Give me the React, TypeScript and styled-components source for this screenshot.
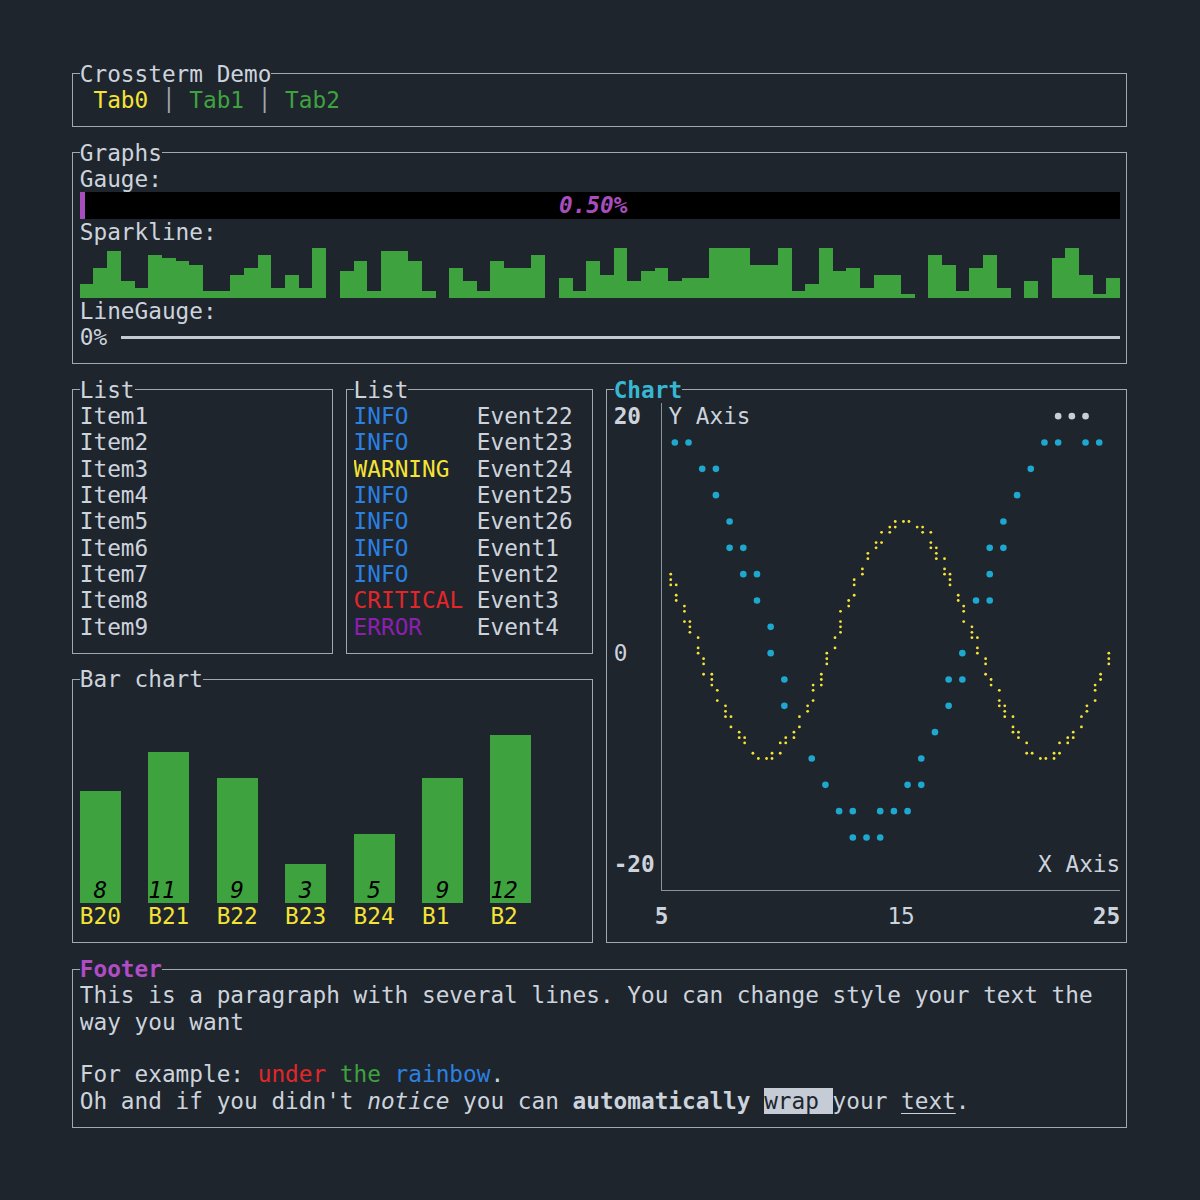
import React from "react";
import styled, { createGlobalStyle } from "styled-components";

// terminal cell size
const CW = 13.69;
const CH = 26.333;
const cols = (n: number) => `${(n * CW).toFixed(2)}px`;
const rows = (n: number) => `${(n * CH).toFixed(2)}px`;

const C = {
  bg: "#1e252d",
  fg: "#cdd3dc",
  border: "#a0a8b2",
  axis: "#8a929c",
  yellow: "#f5e335",
  green: "#3ea33f",
  blue: "#2b80e0",
  red: "#e3262a",
  magenta: "#8c1fae",
  purple: "#a84dbd",
  pink: "#b04cc4",
  cyan: "#1ea8cf",
  cyanTitle: "#38b7d3",
  line: "#c3cad3",
};

const SPARK = [
  4, 9, 14, 5, 3, 13, 12, 11, 10, 2, 2, 7, 9, 13, 3, 7, 3, 15, 0, 8, 11, 2, 14, 14, 11, 2, 0, 9, 5, 2, 11, 9, 9, 13, 0,
  6, 2, 11, 7, 15, 5, 8, 9, 5, 6, 6, 15, 15, 15, 10, 10, 15, 2, 4, 15, 8, 9, 3, 7, 7, 1, 0, 13, 10, 2, 9, 13, 3, 0, 5,
  0, 12, 15, 7, 1, 6,
];

const ITEMS = ["Item1", "Item2", "Item3", "Item4", "Item5", "Item6", "Item7", "Item8", "Item9"];

const LEVEL_COLORS: Record<string, string> = {
  INFO: C.blue,
  WARNING: C.yellow,
  CRITICAL: C.red,
  ERROR: C.magenta,
};

const EVENTS: [string, string][] = [
  ["INFO", "Event22"],
  ["INFO", "Event23"],
  ["WARNING", "Event24"],
  ["INFO", "Event25"],
  ["INFO", "Event26"],
  ["INFO", "Event1"],
  ["INFO", "Event2"],
  ["CRITICAL", "Event3"],
  ["ERROR", "Event4"],
];

const BARS: [string, number][] = [
  ["B20", 8],
  ["B21", 11],
  ["B22", 9],
  ["B23", 3],
  ["B24", 5],
  ["B1", 9],
  ["B2", 12],
];
const BAR_MAX = 15;

// chart data: same signals as the demo, window [5, 25]
const GRAPH_W = 33;
const GRAPH_H = 18;

function signal(interval: number, period: number, scale: number, skip: number, count: number) {
  const pts: [number, number][] = [];
  let x = 0;
  for (let i = 0; i < skip + count; i++) {
    if (i >= skip) pts.push([x, Math.sin(x / period) * scale]);
    x += interval;
  }
  return pts;
}

const inBounds = ([x, y]: [number, number]) => x >= 5 && x <= 25 && y >= -20 && y <= 20;

const yellowDots = (() => {
  const seen = new Set<string>();
  const out: [number, number][] = [];
  signal(0.1, 2, 10, 50, 200)
    .filter(inBounds)
    .forEach(([x, y]) => {
      const dc = Math.floor(((x - 5) * (GRAPH_W * 2 - 1)) / 20);
      const dr = Math.floor(((20 - y) * (GRAPH_H * 4 - 1)) / 40);
      const k = `${dc}:${dr}`;
      if (!seen.has(k)) {
        seen.add(k);
        out.push([dc, dr]);
      }
    });
  return out;
})();

const yellowCells = new Set(yellowDots.map(([dc, dr]) => `${Math.floor(dc / 2)}:${Math.floor(dr / 4)}`));

const cyanDots = (() => {
  const seen = new Set<string>();
  const out: [number, number][] = [];
  signal(0.2, 3, 18, 25, 100)
    .filter(inBounds)
    .forEach(([x, y]) => {
      const c = Math.floor(((x - 5) * (GRAPH_W - 1)) / 20);
      const r = Math.floor(((20 - y) * (GRAPH_H - 1)) / 40);
      const k = `${c}:${r}`;
      if (seen.has(k) || yellowCells.has(k)) return;
      if (r === 0 && c < 6) return; // under the "Y Axis" title
      seen.add(k);
      out.push([c, r]);
    });
  return out;
})();

const SUB_X = [0.2, 0.6];
const SUB_Y = [0.3, 0.5, 0.71, 0.91];

const GlobalStyle = createGlobalStyle`
  html, body {
    margin: 0;
    background: ${C.bg};
  }
  body {
    color: ${C.fg};
    font-family: "DejaVu Sans Mono", "Liberation Mono", monospace;
    font-size: 22.74px;
    line-height: ${CH}px;
  }
`;

const Screen = styled.div`
  width: ${cols(78)};
  margin: 0 auto;
  padding-top: 60.6px;
  display: flex;
  flex-direction: column;
`;

const Block = styled.section<{ $cols: number; $rows: number }>`
  position: relative;
  box-sizing: border-box;
  flex: none;
  width: ${(p) => cols(p.$cols)};
  height: ${(p) => rows(p.$rows)};
  padding: 0 ${cols(1)} ${rows(1)};
  display: flex;
  flex-direction: column;

  &::before {
    content: "";
    position: absolute;
    left: ${CW / 2 - 0.5}px;
    right: ${CW / 2 + 0.3}px;
    top: ${CH / 2 - 0.5}px;
    bottom: ${CH / 2 - 0.5}px;
    border: 1px solid ${C.border};
    pointer-events: none;
  }
`;

const TitleRow = styled.div`
  flex: none;
  height: ${rows(1)};
  display: flex;
`;

const Title = styled.span<{ $color?: string; $bold?: boolean }>`
  position: relative;
  z-index: 1;
  background: ${C.bg};
  color: ${(p) => p.$color || C.fg};
  font-weight: ${(p) => (p.$bold ? 700 : 400)};
  white-space: pre;
`;

const Line = styled.div`
  flex: none;
  height: ${rows(1)};
  white-space: pre;
  overflow: hidden;
`;

const Span = styled.span<{ $color?: string; $bold?: boolean; $italic?: boolean; $underline?: boolean }>`
  color: ${(p) => p.$color || "inherit"};
  font-weight: ${(p) => (p.$bold ? 700 : 400)};
  font-style: ${(p) => (p.$italic ? "italic" : "normal")};
  text-decoration: ${(p) => (p.$underline ? "underline" : "none")};
  text-decoration-thickness: 1px;
  text-underline-offset: 4px;
`;

const Reversed = styled.span`
  background: #c5ccd6;
  color: ${C.bg};
`;

/* graphs */
const GaugeTrack = styled.div`
  flex: none;
  height: ${rows(1)};
  background: #000;
  display: grid;
`;

const GaugeFill = styled.div`
  grid-area: 1 / 1;
  justify-self: start;
  height: 100%;
  background: ${C.purple};
`;

const GaugeLabel = styled.span<{ $offset: number }>`
  grid-area: 1 / 1;
  margin-left: ${(p) => cols(p.$offset)};
  color: ${C.purple};
  font-weight: 700;
  font-style: italic;
`;

const Sparkline = styled.div`
  flex: none;
  height: ${rows(2)};
  display: flex;
  align-items: flex-end;
`;

const SparkBar = styled.div`
  flex: none;
  width: ${cols(1)};
  background: ${C.green};
`;

const LineGaugeRow = styled.div`
  flex: none;
  height: ${rows(1)};
  display: flex;
  align-items: center;
  gap: ${cols(1)};
`;

const LineTrack = styled.div`
  flex: 1;
  height: 3px;
  background: ${C.line};
`;

/* middle section */
const Middle = styled.div`
  display: flex;
`;

const LeftColumn = styled.div`
  display: flex;
  flex-direction: column;
`;

const ListsRow = styled.div`
  display: flex;
`;

const Level = styled.span<{ $color: string }>`
  display: inline-block;
  width: ${cols(9)};
  color: ${(p) => p.$color};
`;

const BarArea = styled.div`
  height: ${rows(9)};
  display: flex;
  gap: ${cols(2)};
`;

const BarColumn = styled.div`
  width: ${cols(3)};
  display: flex;
  flex-direction: column;
  justify-content: flex-end;
`;

const Bar = styled.div`
  background: ${C.green};
  display: flex;
  flex-direction: column;
  justify-content: flex-end;
`;

const BarValue = styled.div<{ $offset: number }>`
  height: ${rows(1)};
  padding-left: ${(p) => cols(p.$offset)};
  color: #000;
  font-style: italic;
`;

const BarLabel = styled.div`
  height: ${rows(1)};
  color: ${C.yellow};
`;

/* chart */
const ChartGrid = styled.div`
  display: grid;
  grid-template-columns: ${cols(3)} ${cols(1)} ${cols(GRAPH_W)};
  grid-template-rows: ${rows(GRAPH_H)} ${rows(1)} ${rows(1)};
`;

const YLabels = styled.div`
  grid-column: 1;
  grid-row: 1;
  display: grid;
  grid-template-rows: repeat(${GRAPH_H}, ${rows(1)});
`;

const AxisLabel = styled.span<{ $bold?: boolean; $row?: number; $col?: number }>`
  grid-row: ${(p) => (p.$row !== undefined ? p.$row + 1 : "auto")};
  grid-column: ${(p) => (p.$col !== undefined ? `${p.$col + 1} / span 3` : "auto")};
  font-weight: ${(p) => (p.$bold ? 700 : 400)};
  white-space: pre;
`;

const AxisFrame = styled.div`
  grid-column: 2 / 4;
  grid-row: 1 / 3;
  margin-left: ${CW / 2 - 0.5}px;
  margin-bottom: ${CH / 2 - 0.5}px;
  border-left: 1px solid ${C.axis};
  border-bottom: 1px solid ${C.axis};
`;

const Graph = styled.div`
  grid-column: 3;
  grid-row: 1;
  display: grid;
`;

const GraphCanvas = styled.svg`
  grid-area: 1 / 1;
  display: block;
`;

const AxisTitle = styled.span<{ $end?: boolean }>`
  grid-area: 1 / 1;
  align-self: ${(p) => (p.$end ? "end" : "start")};
  justify-self: ${(p) => (p.$end ? "end" : "start")};
  white-space: pre;
`;

const XLabels = styled.div`
  grid-column: 2 / 4;
  grid-row: 3;
  display: grid;
  grid-template-columns: repeat(${GRAPH_W + 1}, ${cols(1)});
`;

export default function App() {
  const gaugeRatio = 0.005;
  const gaugeCols = 76;
  const gaugeFill = Math.round(gaugeRatio * gaugeCols * 8) / 8;
  const gaugeLabel = "0.50%";

  return (
    <>
      <GlobalStyle />
      <Screen>
        <Block $cols={78} $rows={3}>
          <TitleRow>
            <Title>Crossterm Demo</Title>
          </TitleRow>
          <Line>
            {" "}
            <Span $color={C.yellow}>Tab0</Span>
            <Span $color={C.border}> │ </Span>
            <Span $color={C.green}>Tab1</Span>
            <Span $color={C.border}> │ </Span>
            <Span $color={C.green}>Tab2</Span>
          </Line>
        </Block>

        <Block $cols={78} $rows={9}>
          <TitleRow>
            <Title>Graphs</Title>
          </TitleRow>
          <Line>Gauge:</Line>
          <GaugeTrack>
            <GaugeFill style={{ width: gaugeFill * CW }} />
            <GaugeLabel $offset={Math.floor((gaugeCols - gaugeLabel.length) / 2)}>{gaugeLabel}</GaugeLabel>
          </GaugeTrack>
          <Line>Sparkline:</Line>
          <Sparkline>
            {SPARK.map((v, i) => (
              <SparkBar key={i} style={{ height: (v * CH) / 8 }} />
            ))}
          </Sparkline>
          <Line>LineGauge:</Line>
          <LineGaugeRow>
            <span>0%</span>
            <LineTrack />
          </LineGaugeRow>
        </Block>

        <Middle>
          <LeftColumn>
            <ListsRow>
              <Block $cols={20} $rows={11}>
                <TitleRow>
                  <Title>List</Title>
                </TitleRow>
                {ITEMS.map((item) => (
                  <Line key={item}>{item}</Line>
                ))}
              </Block>
              <Block $cols={19} $rows={11}>
                <TitleRow>
                  <Title>List</Title>
                </TitleRow>
                {EVENTS.map(([level, name]) => (
                  <Line key={name}>
                    <Level $color={LEVEL_COLORS[level]}>{level}</Level>
                    {name}
                  </Line>
                ))}
              </Block>
            </ListsRow>
            <Block $cols={39} $rows={11}>
              <TitleRow>
                <Title>Bar chart</Title>
              </TitleRow>
              <BarArea>
                {BARS.map(([label, value]) => (
                  <BarColumn key={label}>
                    <Bar style={{ height: (Math.floor((value * 64) / BAR_MAX) * CH) / 8 }}>
                      <BarValue $offset={Math.floor((3 - String(value).length) / 2)}>{value}</BarValue>
                    </Bar>
                    <BarLabel>{label}</BarLabel>
                  </BarColumn>
                ))}
              </BarArea>
            </Block>
          </LeftColumn>

          <Block $cols={39} $rows={22}>
            <TitleRow>
              <Title $color={C.cyanTitle} $bold>
                Chart
              </Title>
            </TitleRow>
            <ChartGrid>
              <YLabels>
                <AxisLabel $row={0} $bold>
                  20
                </AxisLabel>
                <AxisLabel $row={9}>0</AxisLabel>
                <AxisLabel $row={17} $bold>
                  -20
                </AxisLabel>
              </YLabels>
              <AxisFrame />
              <Graph>
                <GraphCanvas width={GRAPH_W * CW} height={GRAPH_H * CH}>
                  {cyanDots.map(([c, r]) => (
                    <circle
                      key={`c${c}-${r}`}
                      cx={(c + 0.5) * CW}
                      cy={(r + 0.5) * CH}
                      r={3.3}
                      fill={r === 0 ? "#c8ced6" : C.cyan}
                    />
                  ))}
                  {yellowDots.map(([dc, dr]) => (
                    <circle
                      key={`y${dc}-${dr}`}
                      cx={(Math.floor(dc / 2) + SUB_X[dc % 2]) * CW}
                      cy={(Math.floor(dr / 4) + SUB_Y[dr % 4]) * CH}
                      r={1.4}
                      fill={C.yellow}
                    />
                  ))}
                </GraphCanvas>
                <AxisTitle>Y Axis</AxisTitle>
                <AxisTitle $end>X Axis</AxisTitle>
              </Graph>
              <XLabels>
                <AxisLabel $col={0} $bold>
                  5
                </AxisLabel>
                <AxisLabel $col={17}>15</AxisLabel>
                <AxisLabel $col={32} $bold>
                  25
                </AxisLabel>
              </XLabels>
            </ChartGrid>
          </Block>
        </Middle>

        <Block $cols={78} $rows={7}>
          <TitleRow>
            <Title $color={C.pink} $bold>
              Footer
            </Title>
          </TitleRow>
          <Line>This is a paragraph with several lines. You can change style your text the</Line>
          <Line>way you want</Line>
          <Line />
          <Line>
            For example: <Span $color={C.red}>under</Span> <Span $color={C.green}>the</Span>{" "}
            <Span $color={C.blue}>rainbow</Span>.
          </Line>
          <Line>
            Oh and if you didn't <Span $italic>notice</Span> you can <Span $bold>automatically</Span>{" "}
            <Reversed>wrap </Reversed>your <Span $underline>text</Span>.
          </Line>
        </Block>
      </Screen>
    </>
  );
}
